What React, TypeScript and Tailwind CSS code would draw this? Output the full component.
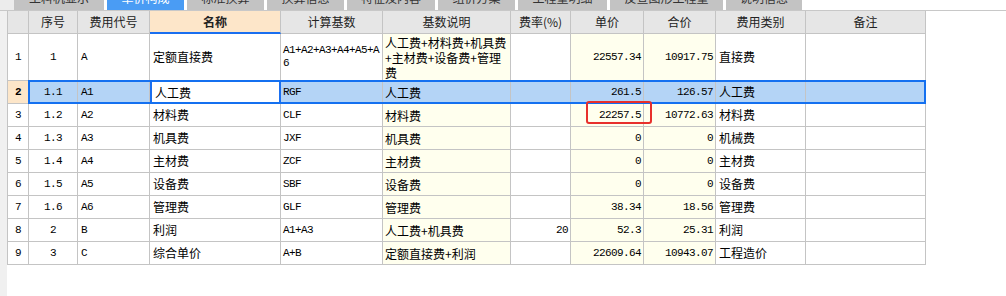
import React from 'react';

type Row = {
  no: string;
  seq: string;
  code: string;
  name: string;
  base: string[];
  desc: string[];
  rate: string;
  price: string;
  total: string;
  kind: string;
};

const tabs = [
  { label: '工料机显示', w: 'w-[90px]' },
  { label: '单价构成', w: 'w-[77px]', active: true },
  { label: '标准换算', w: 'w-[77px]' },
  { label: '换算信息', w: 'w-[77px]' },
  { label: '特征及内容', w: 'w-[88px]' },
  { label: '组价方案', w: 'w-[77px]' },
  { label: '工程量明细', w: 'w-[89px]' },
  { label: '反查图形工程量', w: 'w-[113px]' },
  { label: '说明信息', w: 'w-[76px]' },
];

const rows: Row[] = [
  {
    no: '1', seq: '1', code: 'A', name: '定额直接费',
    base: ['A1+A2+A3+A4+A5+A', '6'],
    desc: ['人工费+材料费+机具费', '+主材费+设备费+管理', '费'],
    rate: '', price: '22557.34', total: '10917.75', kind: '直接费',
  },
  { no: '2', seq: '1.1', code: 'A1', name: '人工费', base: ['RGF'], desc: ['人工费'], rate: '', price: '261.5', total: '126.57', kind: '人工费' },
  { no: '3', seq: '1.2', code: 'A2', name: '材料费', base: ['CLF'], desc: ['材料费'], rate: '', price: '22257.5', total: '10772.63', kind: '材料费' },
  { no: '4', seq: '1.3', code: 'A3', name: '机具费', base: ['JXF'], desc: ['机具费'], rate: '', price: '0', total: '0', kind: '机械费' },
  { no: '5', seq: '1.4', code: 'A4', name: '主材费', base: ['ZCF'], desc: ['主材费'], rate: '', price: '0', total: '0', kind: '主材费' },
  { no: '6', seq: '1.5', code: 'A5', name: '设备费', base: ['SBF'], desc: ['设备费'], rate: '', price: '0', total: '0', kind: '设备费' },
  { no: '7', seq: '1.6', code: 'A6', name: '管理费', base: ['GLF'], desc: ['管理费'], rate: '', price: '38.34', total: '18.56', kind: '管理费' },
  { no: '8', seq: '2', code: 'B', name: '利润', base: ['A1+A3'], desc: ['人工费+机具费'], rate: '20', price: '52.3', total: '25.31', kind: '利润' },
  { no: '9', seq: '3', code: 'C', name: '综合单价', base: ['A+B'], desc: ['定额直接费+利润'], rate: '', price: '22609.64', total: '10943.07', kind: '工程造价' },
];

const mono = "font-['Liberation_Mono','Noto_Sans_CJK_SC',monospace] text-[11px] tracking-[-0.6px]";
const cjk = "font-['Noto_Sans_CJK_SC','Noto_Sans',sans-serif] text-[12px]";
const cell = 'shrink-0 flex items-center border-r border-b border-[#c4c4c4] overflow-hidden whitespace-nowrap';

export default function App() {
  return (
    <div className="w-[1006px] h-[296px] overflow-hidden bg-white flex flex-col text-black">
      {/* tab strip, only its lower edge is in view */}
      <div className="h-[11px] shrink-0 flex items-end overflow-hidden border-b border-[#c8c8c8] bg-white">
        <div className="w-[14px] h-full shrink-0 bg-[#ececec]" />
        <div className="flex items-end gap-[3px]">
          {tabs.map((t) => (
            <div
              key={t.label}
              className={`${t.w} h-[24px] shrink-0 flex items-center justify-center ${cjk} ${
                t.active ? 'bg-[#4a9cf4] text-white' : 'bg-[#c3c3c3] text-[#333]'
              }`}
            >
              {t.label}
            </div>
          ))}
        </div>
      </div>

      <div className="flex-1 flex">
        <div className="w-[7px] shrink-0 bg-[#f0f0f0]" />
        <div className="flex flex-col border-l border-[#c4c4c4] self-start">
          {/* header */}
          <div className={`flex h-[23px] bg-[#e6e6e6] ${cjk} text-[#222]`}>
            <div className={`${cell} w-[21px]`} />
            <div className={`${cell} w-[49px] justify-center`}>序号</div>
            <div className={`${cell} w-[72px] justify-center`}>费用代号</div>
            <div className="shrink-0 w-[131px] flex items-center justify-center border-r border-[#c4c4c4] border-b-2 border-b-[#1a6ff0] bg-[#fde6c9] font-bold">
              名称
            </div>
            <div className={`${cell} w-[102px] justify-center`}>计算基数</div>
            <div className={`${cell} w-[128px] justify-center`}>基数说明</div>
            <div className={`${cell} w-[60px] justify-center`}>费率(%)</div>
            <div className={`${cell} w-[73px] justify-center`}>单价</div>
            <div className={`${cell} w-[72px] justify-center`}>合价</div>
            <div className={`${cell} w-[90px] justify-center`}>费用类别</div>
            <div className={`${cell} w-[120px] justify-center`}>备注</div>
          </div>

          {rows.map((r) => {
            const sel = r.no === '2';
            const tall = r.base.length > 1 || r.desc.length > 1;
            const h = tall ? 'h-[47px]' : 'h-[23px]';
            const yellow = sel ? 'bg-[#b4d4f6]' : 'bg-[#ffffee]';
            return (
              <div key={r.no} className={`relative flex ${h} ${sel ? 'bg-[#b4d4f6]' : ''}`}>
                <div
                  className={`${cell} w-[21px] justify-center ${mono} ${
                    sel ? 'bg-[#fde6c9] font-bold' : 'bg-white'
                  }`}
                >
                  {r.no}
                </div>
                <div className={`${cell} w-[49px] justify-center ${mono}`}>{r.seq}</div>
                <div className={`${cell} w-[72px] pl-[3px] ${mono}`}>{r.code}</div>
                <div
                  className={`shrink-0 w-[131px] flex items-center pl-[3px] ${cjk} ${
                    sel
                      ? 'bg-white border-x-2 border-[#1a6ff0]'
                      : 'border-r border-b border-[#c4c4c4]'
                  }`}
                >
                  {r.name}
                </div>
                <div className={`${cell} w-[102px] pl-[2px] ${mono} leading-[13px]`}>
                  <div className="flex flex-col">
                    {r.base.map((b) => (
                      <span key={b}>{b}</span>
                    ))}
                  </div>
                </div>
                <div className={`${cell} w-[128px] pl-[2px] ${cjk} leading-[15px] ${yellow}`}>
                  <div className="flex flex-col">
                    {r.desc.map((d) => (
                      <span key={d}>{d}</span>
                    ))}
                  </div>
                </div>
                <div className={`${cell} w-[60px] justify-end pr-[2px] ${mono}`}>{r.rate}</div>
                <div className={`${cell} w-[73px] justify-end pr-[2px] ${mono} ${yellow}`}>{r.price}</div>
                <div className={`${cell} w-[72px] justify-end pr-[2px] ${mono} ${yellow}`}>{r.total}</div>
                <div className={`${cell} w-[90px] pl-[3px] ${cjk}`}>{r.kind}</div>
                <div className={`${cell} w-[120px]`} />

                {sel && (
                  <div className="absolute left-[20px] right-0 top-[-1px] bottom-0 border-2 border-[#1470f0] pointer-events-none" />
                )}
                {r.no === '3' && (
                  <div className="absolute left-[578px] top-[-3px] w-[66px] h-[23px] border-2 border-[#e8302c] rounded-[3px] pointer-events-none" />
                )}
              </div>
            );
          })}
        </div>
      </div>
    </div>
  );
}
